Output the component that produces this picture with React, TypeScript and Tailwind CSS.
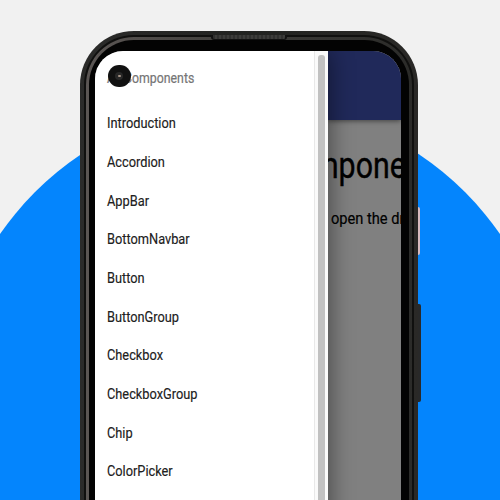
const items = [
  'Introduction',
  'Accordion',
  'AppBar',
  'BottomNavbar',
  'Button',
  'ButtonGroup',
  'Checkbox',
  'CheckboxGroup',
  'Chip',
  'ColorPicker',
];

function Drawer() {
  return (
    <aside className="relative z-10 flex h-full w-[232.7px] shrink-0 bg-white shadow-[2px_0_22px_rgba(0,0,0,0.45)]">
      <nav className="w-[219px] pl-[12px] pt-[1px] text-[15.5px] text-[#202020]">
        <div className="flex h-[52.8px] items-center">
          <span className="origin-left scale-x-[0.82] whitespace-nowrap text-[15px] text-[#757575] [-webkit-text-stroke:0.2px_#757575]">All Components</span>
        </div>
        <ul>
          {items.map((item) => (
            <li key={item} className="flex h-[38.65px] items-center">
              <span className="origin-left scale-x-[0.825] whitespace-nowrap [-webkit-text-stroke:0.15px_#202020]">{item}</span>
            </li>
          ))}
        </ul>
      </nav>
      <div className="flex w-[13.7px] border-l border-[#e8e8e8] bg-[#fafafa] pl-[3px] pt-[4px]">
        <div className="h-full w-[7px] rounded-t-[3px] bg-[#c1c1c1]" />
      </div>
    </aside>
  );
}

function Content() {
  return (
    <main className="min-w-0 flex-1 overflow-hidden bg-[#808080] text-black">
      <header className="h-[69px] bg-[#20295a] shadow-[0_1px_5px_rgba(0,0,0,0.5)]" />
      <div className="flex h-[91px] items-center justify-start overflow-hidden">
        <h1 className="-ml-[15.7px] origin-left scale-x-[0.82] whitespace-nowrap pt-[1px] text-[37px] [-webkit-text-stroke:0.4px_#000]">mponents</h1>
      </div>
      <p className="-mt-[5px] ml-[3.2px] origin-left scale-x-[0.86] whitespace-nowrap text-[17px] leading-[24px] [-webkit-text-stroke:0.2px_#000]">open the drawer</p>
    </main>
  );
}

function Phone() {
  return (
    <div className="relative ml-[79.5px] mt-[30.5px] h-[520px] w-[338.5px]">
      <i className="absolute left-[337px] top-[176px] h-[48px] w-[3.5px] rounded-r-[2px] border-l border-[#9b6973] bg-[#d7b9bd]" />
      <i className="absolute left-[337px] top-[273.5px] h-[98px] w-[4px] rounded-r-[2px] bg-[#292929]" />
      <div className="relative h-full rounded-t-[54px] bg-linear-to-r from-[#2b2b2a] via-[#222321] to-[#2a2927] px-[4px] pt-[4px]">
        <div className="h-full rounded-t-[50px] bg-[#10100f] px-[2px] pt-[2px]">
          <div className="h-full rounded-t-[48px] bg-linear-to-r from-[#5b5654] via-[#3d3c39] to-[#2b2b29] px-[3px] pt-[3px]">
            <div className="h-full rounded-t-[45px] bg-[#030303] pl-[6.5px] pr-[8px] pt-[11.5px]">
              <div className="flex h-full overflow-hidden rounded-t-[28px] bg-[#808080]">
                <Drawer />
                <Content />
              </div>
            </div>
          </div>
        </div>
      </div>
      <div className="absolute left-[131px] top-[4.5px] h-[5px] w-[76px] rounded-b-[3px] border-x-2 border-b border-[#111] bg-[repeating-linear-gradient(90deg,#30302f_0_2px,#3d3d3b_2px_4px)]" />
      <div className="absolute left-[28.5px] top-[34px] z-20 flex h-[22.5px] w-[22.5px] items-center justify-center rounded-full bg-[#111]">
        <div className="flex size-[8px] items-center justify-center rounded-full bg-[#282828]">
          <div className="size-[2.5px] rounded-full bg-[#a99688]" />
        </div>
      </div>
    </div>
  );
}

export default function App() {
  return (
    <div className="relative isolate flex h-[500px] w-[500px] items-start overflow-hidden bg-[#f1f1f1] font-[Roboto,sans-serif]">
      <div className="absolute -left-[54px] top-[103px] -z-10 size-[608px] rounded-full bg-[#0485fd]" />
      <Phone />
    </div>
  );
}
